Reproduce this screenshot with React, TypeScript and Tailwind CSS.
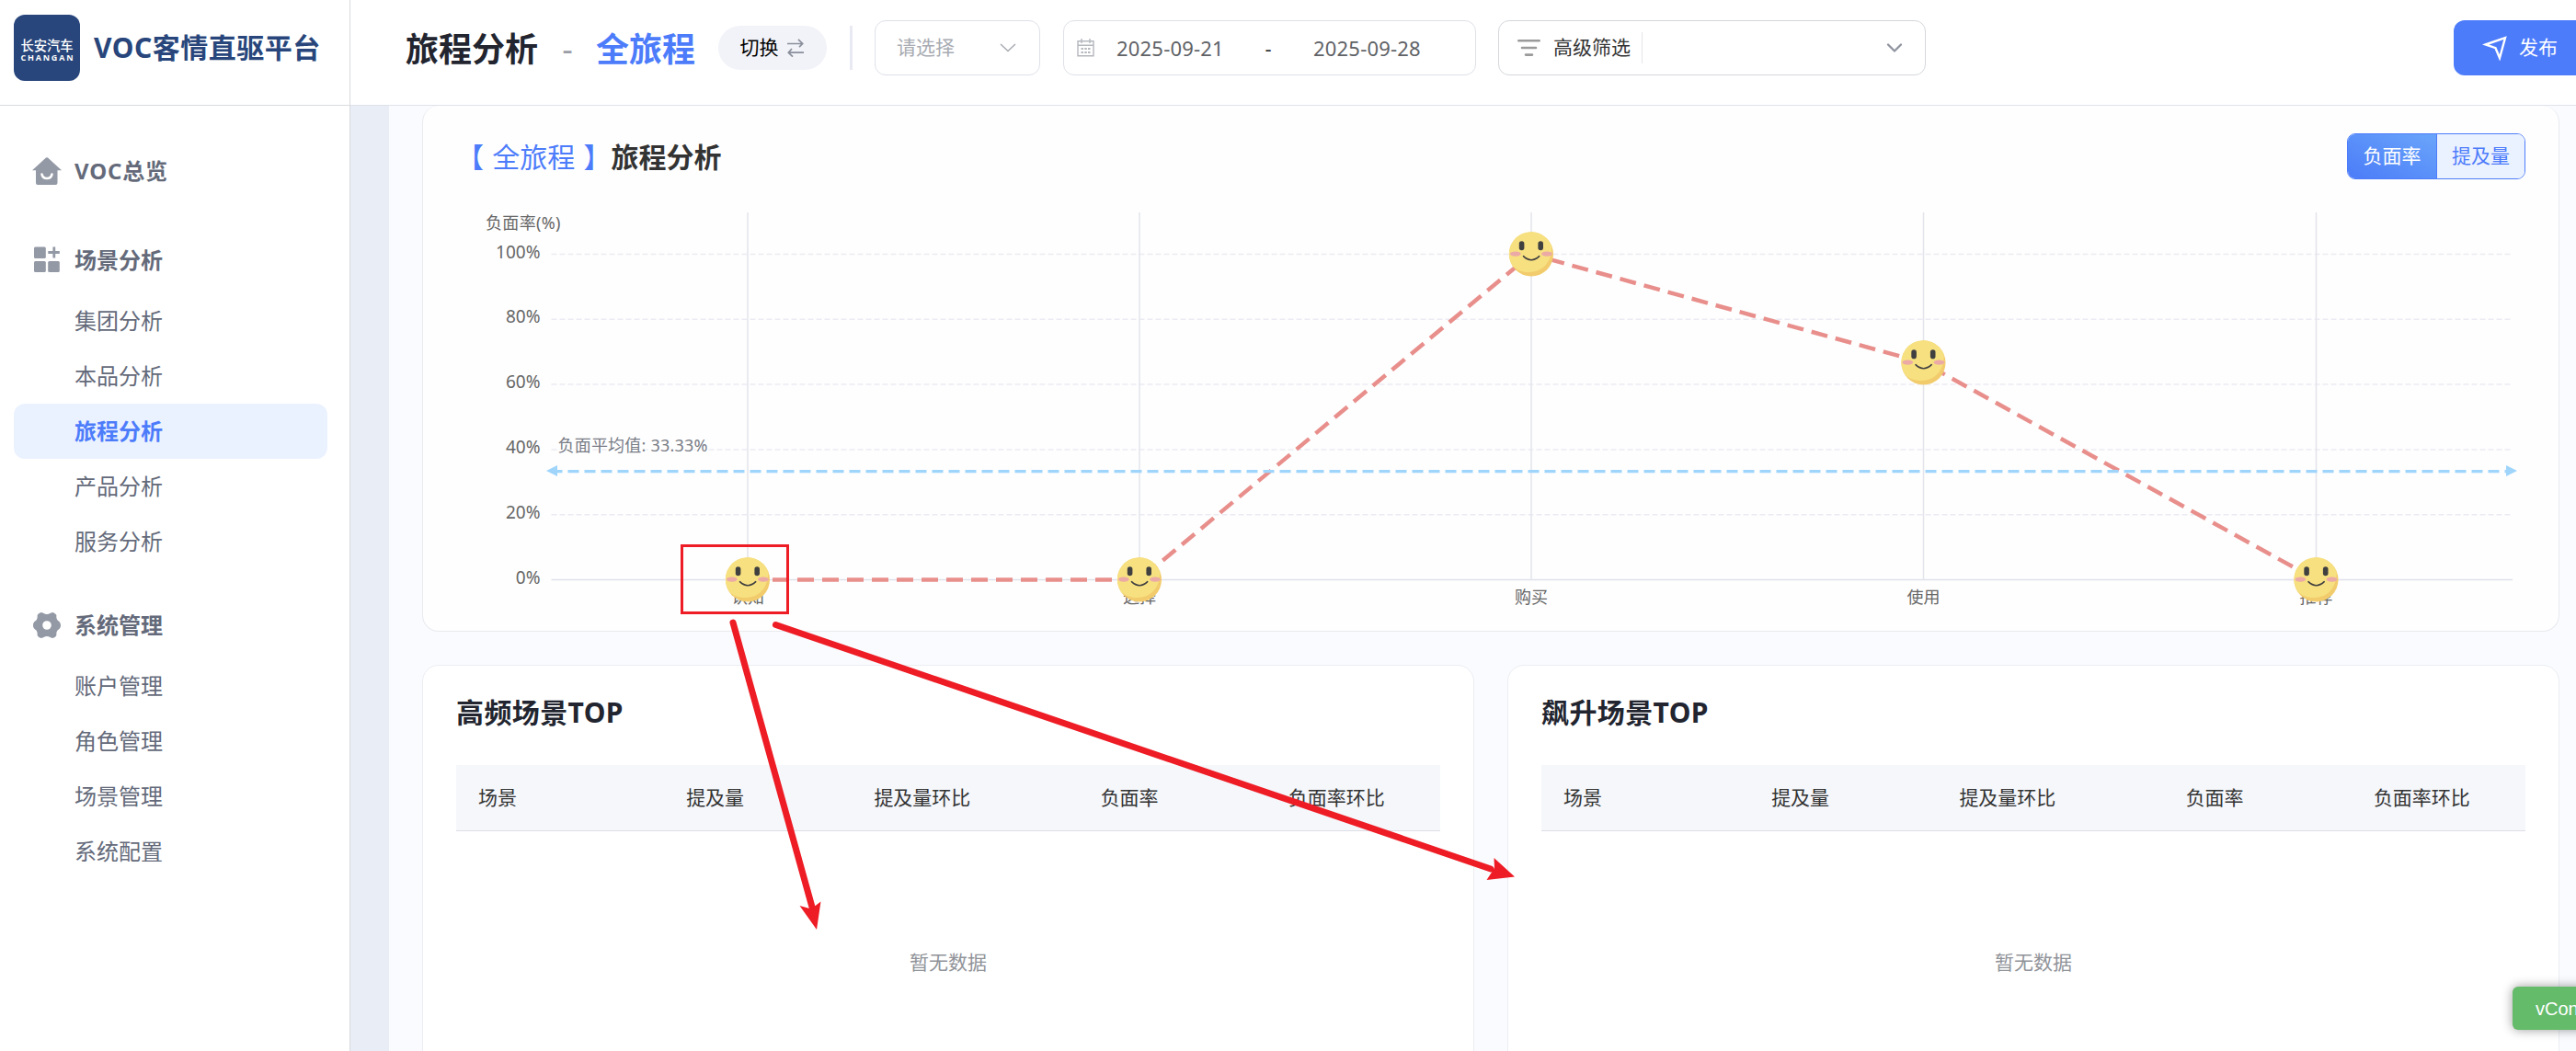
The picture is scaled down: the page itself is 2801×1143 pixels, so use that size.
import { ChevronDown } from "lucide-react";
import clsx from "clsx";

const menu = [
  { title: "VOC总览", icon: "home", children: [] },
  {
    title: "场景分析",
    icon: "grid",
    children: ["集团分析", "本品分析", "旅程分析", "产品分析", "服务分析"],
  },
  {
    title: "系统管理",
    icon: "gear",
    children: ["账户管理", "角色管理", "场景管理", "系统配置"],
  },
];

const journey = [
  { name: "认知", x: 813, value: 0 },
  { name: "选择", x: 1239, value: 0 },
  { name: "购买", x: 1665, value: 100 },
  { name: "使用", x: 2091.5, value: 66.67 },
  { name: "推荐", x: 2518.5, value: 0 },
];

const columns = ["提及量", "提及量环比", "负面率", "负面率环比"];

const yOf = (v: number) => 630.5 - v * 3.54;

function MenuIcon({ name }: { name: string }) {
  if (name === "home") {
    return (
      <svg viewBox="0 0 36 36" className="w-9 h-9" fill="#9399a5">
        <path d="M17 3.6a1.5 1.5 0 0 1 2 0L34 17.3H29.5V31a2 2 0 0 1-2 2H8a2 2 0 0 1-2-2V17.3H2z" />
        <path d="M12.5 21.5a5.6 5.6 0 0 0 11 0" fill="none" stroke="#fff" strokeWidth="2.6" strokeLinecap="round" />
      </svg>
    );
  }
  if (name === "grid") {
    return (
      <svg viewBox="0 0 36 36" className="w-9 h-9" fill="#9399a5">
        <rect x="4" y="3.5" width="12.8" height="12.5" rx="1.5" />
        <rect x="4" y="19" width="12.8" height="12" rx="1.5" />
        <rect x="19.2" y="19" width="12.6" height="12" rx="1.5" />
        <path d="M25.8 3.5v12M19.3 9.5h12.5" stroke="#9399a5" strokeWidth="2.8" />
      </svg>
    );
  }
  return (
    <svg viewBox="0 0 36 36" className="w-9 h-9">
      <path
        fillRule="evenodd"
        fill="#9399a5"
        d="M12 4c2 .2 3 2 6 2s4-1.8 6-2c2.500.6 4 2 4.400 3.300-.3 2 .2 4.200 1.200 5.200 1 1.200 3.400 1.800 3.400 5.500s-2.400 4.300-3.400 5.500c-1 1-1.500 3.200-1.200 5.200-.4 1.300-1.900 2.700-4.400 3.300-2-.2-3-2-6-2s-4 1.800-6 2c-2.500-.6-4-2-4.400-3.300.3-2-.2-4.200-1.200-5.200-1-1.200-3.400-1.800-3.400-5.500s2.400-4.300 3.400-5.500c1-1 1.500-3.200 1.200-5.200.4-1.300 1.900-2.700 4.400-3.300zM18 13.200a4.800 4.800 0 1 0 0 9.600a4.800 4.800 0 0 0 0-9.600z"
      />
    </svg>
  );
}

function Sidebar() {
  return (
    <aside className="w-[381px] shrink-0 border-r border-[#d9dadd] bg-white flex flex-col">
      <div className="h-[115px] border-b border-[#d9dadd] pl-[15px] pt-4 flex items-start gap-[15px]">
        <div className="w-[72px] h-[72px] rounded-xl bg-[#28467b] text-white flex flex-col items-center justify-center pt-[5px]">
          <span className="text-[14.3px] leading-[14px] font-medium">长安汽车</span>
          <span className="mt-[1px] font-['Open_Sans'] text-[9px] leading-[9px] font-bold tracking-[1.8px] mr-[-1.8px]">
            CHANGAN
          </span>
        </div>
        <h1 className="h-[70px] flex items-center text-[30px] font-bold text-[#28467b] tracking-[0.5px] whitespace-nowrap">
          VOC客情直驱平台
        </h1>
      </div>

      <nav className="pt-[41px] flex flex-col">
        {menu.map((group) => (
          <div key={group.title} className="mb-[31px] text-2xl">
            <div className="h-[60px] mb-[6px] pl-[33px] flex items-center gap-3 font-bold text-[#646a7a]">
              <MenuIcon name={group.icon} />
              <span className={clsx(group.icon === "home" && "tracking-[0.8px]")}>{group.title}</span>
            </div>
            {group.children.map((item) => (
              <div
                key={item}
                className={clsx(
                  "h-[60px] ml-[15px] mr-[24px] pl-[66px] rounded-xl flex items-center",
                  item === "旅程分析" ? "bg-[#ebf2ff] text-[#4d7cfb] font-bold" : "text-[#646a7a]"
                )}
              >
                {item}
              </div>
            ))}
          </div>
        ))}
      </nav>
    </aside>
  );
}

function TopBar() {
  return (
    <header className="h-[115px] shrink-0 border-b border-[#e0e1ea] bg-white pl-[60px] pt-[22px] flex items-start text-[21px] whitespace-nowrap">
      <div className="h-[60px] flex items-center">
        <h2 className="w-[145px] pt-[3px] text-4xl font-bold text-[#22252f]">旅程分析</h2>
        <span className="w-[62px] pt-[2px] text-center text-[36px] text-[#9a9da5]">-</span>
        <h2 className="w-[133px] pt-[3px] text-4xl font-bold text-[#4d7cfb]">全旅程</h2>
        <button className="w-[118px] h-12 pr-[2px] rounded-full bg-[#f2f3f8] text-black flex items-center justify-center gap-[9px]">
          切换
          <svg viewBox="0 0 18 20" className="w-[18px] h-5" fill="none" stroke="#8a8f9c" strokeWidth="1.7">
            <path d="M0 5.5h16.5M12 .8l4.7 4.7L13 9.2M18 15.2H1.5M6 19.7L1.3 15.2L5 11" />
          </svg>
        </button>
        <div className="w-[3px] h-12 ml-[25px] bg-[#e8e9f2]" />
      </div>

      <div className="w-[180px] h-[60px] ml-6 pl-[23px] pr-[25px] rounded-xl border-[1.5px] border-[#dfe1e8] flex items-center justify-between text-[#a8abb2]">
        请选择
        <svg viewBox="0 0 18 10" className="w-[18px] h-[10px]" fill="none" stroke="#a8abb2" strokeWidth="1.5">
          <path d="M1 1l8 7.5L17 1" />
        </svg>
      </div>

      <div className="w-[449px] h-[60px] ml-[25px] pl-[14px] rounded-xl border-[1.5px] border-[#dfe1e8] flex items-center text-[22px] text-[#606266]">
        <svg viewBox="0 0 19 20" className="w-[19px] h-5" fill="none" stroke="#b4b7be" strokeWidth="1.4">
          <path d="M1 2.8h17v16H1zM1 7.3h17M5 0v5M14 0v5" />
          <path d="M4.5 11h2.5M8.3 11h2.500M12 11h2.500M4.500 15h2.500M8.300 15h2.500M12 15h2.500" strokeWidth="2" />
        </svg>
        <span className="w-[116px] ml-[24px] tracking-[0.2px]">2025-09-21</span>
        <span className="w-[98px] text-center text-[#303133]">-</span>
        <span className="tracking-[0.2px]">2025-09-28</span>
      </div>

      <div className="w-[465px] h-[60px] ml-6 pl-5 pr-[23px] rounded-xl border border-[#d5d7db] flex items-center text-[#333]">
        <svg viewBox="0 0 25 20" className="w-[25px] h-5" stroke="#9a9a9a" strokeWidth="2.6" strokeLinecap="round">
          <path d="M1.3 2.3h22.4M5 10h15M9 17.6h7" />
        </svg>
        <span className="ml-[14px]">高级筛选</span>
        <div className="w-px h-[34px] ml-[12px] bg-[#e4e5ea]" />
        <ChevronDown className="ml-auto w-[28px] h-[28px] -mr-[4px] text-[#8f949f]" strokeWidth={2} />
      </div>

      <button className="w-[150px] h-[60px] ml-auto mr-[-17px] pl-[31px] rounded-xl bg-[#4d7cfb] text-white flex items-center">
        <svg viewBox="0 0 28 28" className="w-7 h-7" fill="none" stroke="#fff" strokeWidth="2.4">
          <path d="M3.5 10.5L25 3.2L19 25L14.5 14.2z" />
        </svg>
        <span className="ml-[12px]">发布</span>
      </button>
    </header>
  );
}

function Smiley({ x, y }: { x: number; y: number }) {
  return (
    <g transform={`translate(${x} ${y})`}>
      <circle r="24" fill="#f2cc6c" />
      <path
        fill="#f7e080"
        d="M-20 13.2A24 24 0 1 1 22.3-8.7C22.5 8 13 19.5-3 19.5C-10 19.5-16 17-20 13.2z"
      />
      <rect x="-13.2" y="-14.2" width="5.6" height="10" rx="2.8" fill="#404040" />
      <rect x="7.4" y="-14.2" width="5.6" height="10" rx="2.8" fill="#404040" />
      <ellipse cx="-17.2" cy="-.4" rx="5.9" ry="2.6" fill="#ecaaa6" />
      <ellipse cx="17" cy="-.4" rx="5.9" ry="2.6" fill="#ecaaa6" />
      <path d="M-8.5 2.2Q0 10.3 8.7 2.2" fill="none" stroke="#404040" strokeWidth="1.6" strokeLinecap="round" />
    </g>
  );
}

function JourneyChart() {
  const points = journey.map((p) => `${p.x},${yOf(p.value)}`).join(" ");
  return (
    <svg viewBox="496 215 2250 460" className="block w-[2250px] h-[460px]" fontSize="18" fill="#666">
      <text x="528" y="249" letterSpacing="0.35">负面率(%)</text>
      {[0, 20, 40, 60, 80, 100].map((v) => (
        <g key={v}>
          <text x="587.5" y={yOf(v) + 4} textAnchor="end" fontSize="19">
            {v}%
          </text>
          <line
            x1="599.5"
            x2="2732"
            y1={yOf(v)}
            y2={yOf(v)}
            stroke={v ? "#ebebf3" : "#e0e1ea"}
            strokeWidth="1.5"
            strokeDasharray={v ? "6 3" : undefined}
          />
        </g>
      ))}
      {journey.map((p) => (
        <g key={p.name}>
          <line x1={p.x} x2={p.x} y1="231" y2="630.5" stroke="#e3e4ec" strokeWidth="1.5" />
          <text x={p.x} y="656" textAnchor="middle">{p.name}</text>
        </g>
      ))}

      <polyline points={points} fill="none" stroke="#e88f8c" strokeWidth="4.5" strokeDasharray="18 9" />

      <line x1="599.5" x2="2731" y1="512.7" y2="512.7" stroke="#9fd5fb" strokeWidth="3.2" strokeDasharray="12 6" />
      <path d="M594 512l12-6v12zM2737 512l-12-6v12z" fill="#9fd5fb" />
      <text x="606.5" y="491" fill="#777b85" stroke="#fff" strokeWidth="3" paintOrder="stroke" letterSpacing="0.2">
        负面平均值: 33.33%
      </text>

      {journey.map((p) => (
        <Smiley key={p.name} x={p.x} y={yOf(p.value)} />
      ))}
    </svg>
  );
}

function SceneTable({ title }: { title: string }) {
  return (
    <section className="h-[600px] px-9 pt-[28px] rounded-[18px] border border-[#ebedf2] bg-white">
      <h3 className="h-[45px] flex items-center text-[30px] font-bold text-[#22252f] tracking-[0.4px]">{title}</h3>
      <div className="h-[72px] mt-[35px] flex items-center bg-[#f5f7fb] border-b-[1.5px] border-[#dcdee6] text-[21px] text-[#333]">
        <div className="w-[169px] pl-6">场景</div>
        {columns.map((c) => (
          <div key={c} className="flex-1 text-center">{c}</div>
        ))}
      </div>
      <div className="h-[285px] flex items-center justify-center text-[21px] text-[#909399]">暂无数据</div>
    </section>
  );
}

// Red box and arrows drawn over the page
function Annotations() {
  return (
    <svg viewBox="720 580 940 440" className="absolute left-[720px] top-[580px] w-[940px] h-[440px]" fill="#ee1c25">
      <rect x="741.5" y="593.5" width="115" height="73" fill="none" stroke="#ee1c25" strokeWidth="3" />
      <path d="M797 677L884 990M843.5 679.5L1621 945" stroke="#ee1c25" strokeWidth="7" strokeLinecap="round" />
      <path d="M888 1011L869.5 985L882 988.5L892.5 980.5z" />
      <path d="M1647 953.5L1624.5 933L1625 944L1616.5 957z" />
    </svg>
  );
}

export default function App() {
  return (
    <div className="relative w-[2801px] h-[1143px] overflow-hidden flex bg-[#fafbfe] font-['Noto_Sans','Noto_Sans_CJK_SC',sans-serif]">
      <Sidebar />
      <div className="flex-1 min-w-0 flex flex-col">
        <TopBar />
        <div className="flex-1 min-h-0 flex">
          <div className="w-[42px] shrink-0 bg-[#e8edf6]" />
          <main className="flex-1 min-w-0 pl-9 pr-[18px]">
            <section className="h-[572px] px-9 rounded-[18px] border border-t-0 border-[#e8eaef] bg-[#fefefe]">
              <div className="h-[100px] pt-[30px] flex items-start justify-between">
                <h3 className="h-[50px] flex items-center text-[30px] font-bold text-[#333] whitespace-pre">
                  <span className="font-normal text-[#4d7cfb] [word-spacing:1.5px]">【 全旅程 】</span>
                  旅程分析
                </h3>
                <div className="w-[194px] h-[50px] rounded-[9px] border border-[#4d7cfb] overflow-hidden flex text-[21px]">
                  <button className="w-[96px] bg-linear-to-tr from-[#4c7bf8] to-[#6aa5fa] text-white">负面率</button>
                  <button className="flex-1 border-l border-[#4d7cfb] bg-[#ebf2ff] text-[#4d7cfb]">提及量</button>
                </div>
              </div>
              <JourneyChart />
            </section>

            <div className="mt-9 grid grid-cols-2 gap-9">
              <SceneTable title="高频场景TOP" />
              <SceneTable title="飙升场景TOP" />
            </div>
          </main>
        </div>
      </div>

      <Annotations />
      <button className="absolute left-[2732px] top-[1073px] w-[120px] h-[47px] pl-[25px] rounded-md bg-[#64bb6a] text-left text-[20px] text-white font-['Liberation_Sans',sans-serif] shadow-[0_0_12px_rgba(0,0,0,0.4)]">
        vConsole
      </button>
    </div>
  );
}
